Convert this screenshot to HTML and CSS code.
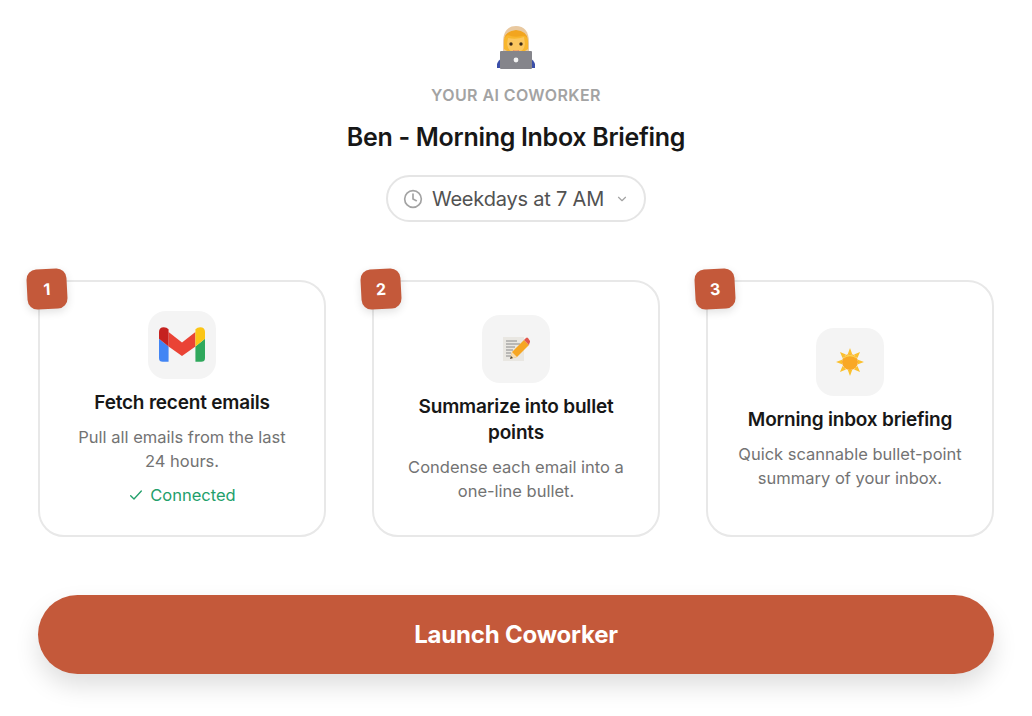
FILE: index.html
```html
<!DOCTYPE html>
<html lang="en">
<head>
<meta charset="utf-8">
<title>Ben - Morning Inbox Briefing</title>
<link rel="stylesheet" href="styles.css">
</head>
<body>
<main class="page">
  <header class="head">
    <svg class="avatar" viewBox="0 0 40 44" width="40" height="44" aria-hidden="true">
      <path d="M1 43 L1 39 Q2 35 7 33 L33 33 Q38 35 39 39 L39 43Z" fill="#3b4fa8"/>
      <path d="M7 18 C7 6 12 1 20 1 C28 1 33 6 33 18 L33 28 L7 28Z" fill="#e9c9a0"/>
      <path d="M8 24 L8 15 Q9 7 20 6 Q31 7 32 15 L32 24 L29 26 L11 26Z" fill="#f8b62d"/>
      <path d="M8 15 Q9 6 20 5 Q31 6 32 15 Q30 10 26 11 Q18 13 12 10 Q9 11 8 15Z" fill="#f2a51f"/>
      <path d="M12 13 Q20 15 28 12 L29 19 Q28 27 20 28 Q12 27 11 19Z" fill="#fbc75f"/>
      <circle cx="15" cy="19" r="1.7" fill="#3b2a1a"/>
      <circle cx="25" cy="19" r="1.7" fill="#3b2a1a"/>
      <path d="M17 25 Q20 26 23 25 L23 28 L17 28Z" fill="#e58a6a"/>
      <rect x="4" y="26" width="32" height="18" rx="1" fill="#85858b"/>
      <circle cx="20" cy="35" r="2.4" fill="#f3f3f3"/>
    </svg>
    <p class="eyebrow">YOUR AI COWORKER</p>
    <h1 class="title">Ben - Morning Inbox Briefing</h1>
    <div class="pill">
      <svg class="clock" viewBox="0 0 24 24" width="20" height="20" aria-hidden="true"><circle cx="12" cy="12" r="10"/><path d="M12 6v6l4 2"/></svg>
      <span>Weekdays at 7 AM</span>
      <svg class="chev" viewBox="0 0 24 24" width="14" height="14" aria-hidden="true"><path d="M6 9l6 6 6-6"/></svg>
    </div>
  </header>

  <section class="cards">
    <article class="card">
      <span class="badge">1</span>
      <div class="tile">
        <svg viewBox="0 0 48 36" width="46" height="35" aria-hidden="true">
          <path d="M0 12 L10 20 L10 36 L4 36 Q0 36 0 32Z" fill="#4285f4"/>
          <path d="M38 20 L48 12 L48 32 Q48 36 44 36 L38 36Z" fill="#2fa85c"/>
          <path d="M10 5 L24 16 L38 5 L38 20 L24 30 L10 20Z" fill="#ea4335"/>
          <path d="M0 5 Q0 0 5 0 Q8 0 10 2 L10 20 L0 12Z" fill="#c5221f"/>
          <path d="M38 2 Q40 0 43 0 Q48 0 48 5 L48 12 L38 20Z" fill="#fbc515"/>
        </svg>
      </div>
      <h2 class="card-title">Fetch recent emails</h2>
      <p class="card-text">Pull all emails from the last<br>24 hours.</p>
      <p class="status">
        <svg viewBox="0 0 24 24" width="16" height="16" aria-hidden="true"><path d="M4 13l5 5L20 6"/></svg>
        <span>Connected</span>
      </p>
    </article>

    <article class="card">
      <span class="badge">2</span>
      <div class="tile">
        <svg viewBox="0 0 28 28" width="28" height="28" aria-hidden="true">
          <rect x="1" y="2" width="21" height="24" fill="#e9e7e2"/>
          <path d="M4 6h11M4 9h14M4 12h9M4 15h7M4 18h5M4 21h5" stroke="#8a8a8a" stroke-width="1" fill="none"/>
          <path d="M8 24 L10 17 L22 5 L27 10 L15 22Z" fill="#f6a623"/>
          <path d="M22 5 L24 3 Q25 2 26 3 L28 6 Q28.500 7 27.500 8 L27 10Z" fill="#e2574c"/>
          <path d="M8 24 L10 17 L15 22Z" fill="#f6dcb0"/>
          <path d="M8 24 L9 21 L11 23Z" fill="#444"/>
        </svg>
      </div>
      <h2 class="card-title">Summarize into bullet points</h2>
      <p class="card-text">Condense each email into a<br>one-line bullet.</p>
    </article>

    <article class="card">
      <span class="badge">3</span>
      <div class="tile">
        <svg viewBox="0 0 28 28" width="28" height="28" aria-hidden="true">
          <path d="M14 0l2.200 6h-4.400zM14 28l-2.200-6h4.400zM0 14l6-2.200v4.400zM28 14l-6 2.200v-4.400zM4 4l6 2.500-3.500 3.500zM24 24l-6-2.500 3.500-3.500zM24 4l-2.500 6-3.500-3.500zM4 24l2.500-6 3.500 3.500z" fill="#fbc02d"/>
          <circle cx="14" cy="14" r="8" fill="#f9a825"/>
          <path d="M7 11 a8 8 0 0 1 14 0 a10 10 0 0 0 -14 0z" fill="#fdd34f"/>
        </svg>
      </div>
      <h2 class="card-title">Morning inbox briefing</h2>
      <p class="card-text">Quick scannable bullet-point<br>summary of your inbox.</p>
    </article>
  </section>

  <button class="launch" type="button">Launch Coworker</button>
</main>
</body>
</html>
```
FILE: styles.css
```css
* { box-sizing: border-box; }
html, body { margin: 0; padding: 0; background: #fff; }
body { font-family: Inter, "Liberation Sans", sans-serif; color: #171717; }
.page { width: 1032px; height: 716px; padding: 25px 38px 0 38px; overflow: hidden; }
.head { display: flex; flex-direction: column; align-items: center; }
.avatar { display: block; }
.eyebrow { margin: 16px 0 0; font-size: 16px; line-height: 20px; font-weight: 600; letter-spacing: 0.4px; color: #a3a3a3; }
.title { margin: 15px 0 0; font-size: 25px; line-height: 34px; font-weight: 600; letter-spacing: -0.3px; color: #171717; }
.pill { margin-top: 21px; width: 260px; height: 47px; border: 2px solid #e5e5e5; border-radius: 24px; display: flex; align-items: center; justify-content: center; gap: 9px; font-size: 20px; letter-spacing: -0.2px; color: #525252; }
.clock, .chev { fill: none; stroke: #a3a3a3; stroke-width: 2; stroke-linecap: round; stroke-linejoin: round; }
.chev { margin-left: 2px; }
.cards { margin-top: 58px; display: grid; grid-template-columns: repeat(3, 288px); column-gap: 46px; }
.card { position: relative; height: 257px; border: 2px solid #e8e8e8; border-radius: 26px; padding: 0 24px; display: flex; flex-direction: column; align-items: center; justify-content: center; text-align: center; }
.badge { position: absolute; left: -13px; top: -13px; width: 40px; height: 40px; border-radius: 10px; background: #c4593a; color: #fff; font-size: 16px; font-weight: 700; display: flex; align-items: center; justify-content: center; transform: rotate(-3deg); box-shadow: 0 3px 8px rgba(0,0,0,.12); }
.tile { width: 68px; height: 68px; border-radius: 18px; background: #f4f4f4; display: flex; align-items: center; justify-content: center; }
.card-title { margin: 11px 0 0; font-size: 19px; line-height: 26px; font-weight: 600; letter-spacing: -0.2px; color: #171717; }
.card-text { margin: 9px 0 0; font-size: 16.500px; line-height: 24px; color: #737373; }
.status { margin: 10px 0 0; display: flex; align-items: center; gap: 6px; font-size: 16.500px; line-height: 24px; color: #22a06b; }
.status svg { fill: none; stroke: #22a06b; stroke-width: 2; stroke-linecap: round; stroke-linejoin: round; }
.launch { margin-top: 58px; width: 956px; height: 79px; border: 0; border-radius: 40px; background: #c4593a; color: #fff; font-family: inherit; font-size: 24px; font-weight: 700; letter-spacing: -0.2px; box-shadow: 0 12px 24px rgba(0,0,0,.13); }
```
